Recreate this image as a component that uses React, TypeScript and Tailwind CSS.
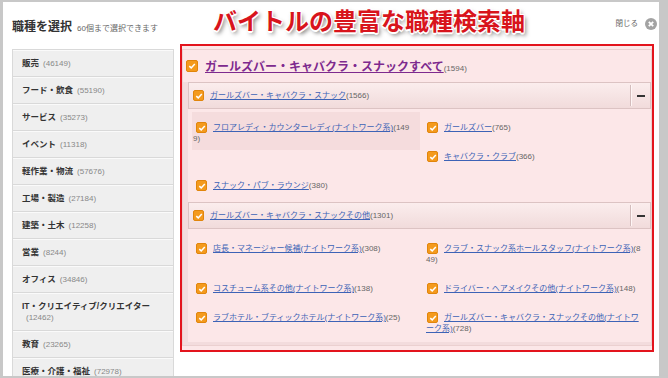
import React from "react";

const categories: [string, string][] = [
  ["販売", "46149"],
  ["フード・飲食", "55190"],
  ["サービス", "35273"],
  ["イベント", "11318"],
  ["軽作業・物流", "57676"],
  ["工場・製造", "27184"],
  ["建築・土木", "12258"],
  ["営業", "8244"],
  ["オフィス", "34846"],
  ["IT・クリエイティブ/クリエイター", "12462"],
  ["教育", "23265"],
  ["医療・介護・福祉", "72978"],
];

function Check({ big, className = "" }: { big?: boolean; className?: string }) {
  return (
    <span
      className={`inline-flex align-top items-center justify-center rounded-[2px] bg-[#f49a1d] border border-[#e1850b] ${
        big ? "w-[12px] h-[12px]" : "w-[11px] h-[11px]"
      } ${className}`}
    >
      <svg viewBox="0 0 10 10" className="w-[8px] h-[8px]">
        <path d="M1.6 5.1 L4 7.4 L8.5 2.6" stroke="#fff" strokeWidth="1.9" fill="none" />
      </svg>
    </span>
  );
}

function Item({
  label,
  count,
  className = "",
  checkClass = "ml-[3px]",
}: {
  label: string;
  count: string;
  className?: string;
  checkClass?: string;
}) {
  return (
    <div className={`pt-[10px] pb-[8px] pr-[7px] leading-[11px] text-[8px] [line-break:anywhere] ${className}`}>
      <Check className={checkClass} />
      <a className="ml-[6px] text-[#3d63b6] underline">{label}</a>
      <span className="text-[#666]">({count})</span>
    </div>
  );
}

function SectionHeader({ label, count }: { label: string; count: string }) {
  return (
    <div className="h-[27px] flex items-center border border-[#dcc3c3] bg-linear-to-b from-[#fbeded] to-[#f1dbdb] pl-[4px]">
      <Check />
      <span className="ml-[6px] text-[8px] leading-[11px]">
        <a className="text-[#3d63b6] underline">{label}</a>
        <span className="text-[#666]">({count})</span>
      </span>
      <div className="ml-auto h-[21px] w-[20px] border-l border-[#d3bcbc] shadow-[inset_1px_0_0_#fff6f6] flex items-center justify-center">
        <span className="block w-[8px] h-[2px] bg-[#333]" />
      </div>
    </div>
  );
}

export default function App() {
  return (
    <div className="w-[668px] h-[378px] bg-[#c8c8c8] pt-[2px] pl-[3px] pr-[9px] pb-[2px] overflow-hidden font-['Liberation_Sans','Noto_Sans_CJK_JP',sans-serif] text-[#333]">
      <div className="relative h-full bg-white overflow-hidden pl-[9px] pr-[2px]">
        <header className="h-[42px] flex items-start">
          <div className="pt-[17px] flex items-baseline">
            <span className="text-[12px] leading-[16px] font-bold text-[#333]">職種を選択</span>
            <span className="ml-[5px] text-[8px] text-[#666]">60個まで選択できます</span>
          </div>
          <div className="ml-auto pt-[16px] flex items-center">
            <span className="text-[7.5px] text-[#666] mr-[7px]">閉じる</span>
            <svg viewBox="0 0 12 12" className="w-[12px] h-[12px]">
              <circle cx="6" cy="6" r="6" fill="#a3a3a3" />
              <path d="M3.8 3.8 L8.2 8.2 M8.2 3.8 L3.8 8.2" stroke="#fff" strokeWidth="1.8" />
            </svg>
          </div>
        </header>

        <div className="flex items-start">
          {/* category list */}
          <div className="w-[162px] mt-[5px] border-x border-t border-[#d9d9d9] shrink-0">
            {categories.map(([name, n]) => (
              <div
                key={name}
                className="bg-[#efefef] border-t border-t-[#fafafa] border-b border-b-[#d9d9d9] pl-[9px] pr-[4px] py-[7px] text-[8.5px] leading-[11px]"
              >
                <span className="font-bold text-[#333]">{name}</span>
                <span className="inline-block ml-[4px] text-[8px] text-[#888]">({n})</span>
              </div>
            ))}
          </div>

          {/* selected group */}
          <div className="ml-[6px] w-[474px] shrink-0 border-2 border-[#e3141d] bg-[#fce7e8] pt-[3px] pb-[4px]">
            <div className="border border-[#ebd0d0] bg-[#f3dcdd] pb-[3px]">
              <div className="h-[32px] flex items-center pl-[3px] bg-[#fce7e8]">
                <Check big />
                <span className="ml-[7px]">
                  <a className="text-[12px] font-bold text-[#7e2a8e] underline">ガールズバー・キャバクラ・スナックすべて</a>
                  <span className="text-[8px] text-[#666]">(1594)</span>
                </span>
              </div>

              <div className="ml-[5px] bg-[#fce7e8]">
                <SectionHeader label="ガールズバー・キャバクラ・スナック" count="1566" />
                <div className="grid grid-cols-[228px_1fr] gap-x-[6px] pl-[4px] pr-[1px] pt-[3px] pb-[3px]">
                  <Item
                    className="col-start-1 row-start-1 row-span-2 self-start bg-[#f5dcdd] pl-[1px] !pb-[6px]"
                    label="フロアレディ・カウンターレディ(ナイトワーク系)"
                    count="1499"
                  />
                  <Item className="col-start-2 row-start-1" checkClass="ml-[1px]" label="ガールズバー" count="765" />
                  <Item className="col-start-2 row-start-2" checkClass="ml-[1px]" label="キャバクラ・クラブ" count="366" />
                  <Item className="col-start-1 row-start-3 pl-[1px]" label="スナック・パブ・ラウンジ" count="380" />
                </div>

                <SectionHeader label="ガールズバー・キャバクラ・スナックその他" count="1301" />
                <div className="grid grid-cols-[228px_1fr] gap-x-[6px] pl-[4px] pr-[1px] pt-[4px]">
                  <Item className="pl-[1px]" label="店長・マネージャー候補(ナイトワーク系)" count="308" />
                  <Item checkClass="ml-[1px]" label="クラブ・スナック系ホールスタッフ(ナイトワーク系)" count="849" />
                  <Item className="pl-[1px]" label="コスチューム系その他(ナイトワーク系)" count="138" />
                  <Item checkClass="ml-[1px]" label="ドライバー・ヘアメイクその他(ナイトワーク系)" count="148" />
                  <Item className="pl-[1px]" label="ラブホテル・ブティックホテル(ナイトワーク系)" count="25" />
                  <Item checkClass="ml-[1px]" label="ガールズバー・キャバクラ・スナックその他(ナイトワーク系)" count="728" />
                </div>
              </div>
            </div>
          </div>
        </div>

        <h1 className="absolute left-[210px] top-[4px] text-[24px] leading-[28px] font-bold text-[#d8141c] font-['Noto_Sans_CJK_JP',sans-serif] [text-shadow:1px_1px_0_#fff,-1px_-1px_0_#fff,1px_-1px_0_#fff,-1px_1px_0_#fff,0_2px_0_#fff,2px_3px_4px_rgba(0,0,0,0.55)]">
          バイトルの豊富な職種検索軸
        </h1>
      </div>
    </div>
  );
}
